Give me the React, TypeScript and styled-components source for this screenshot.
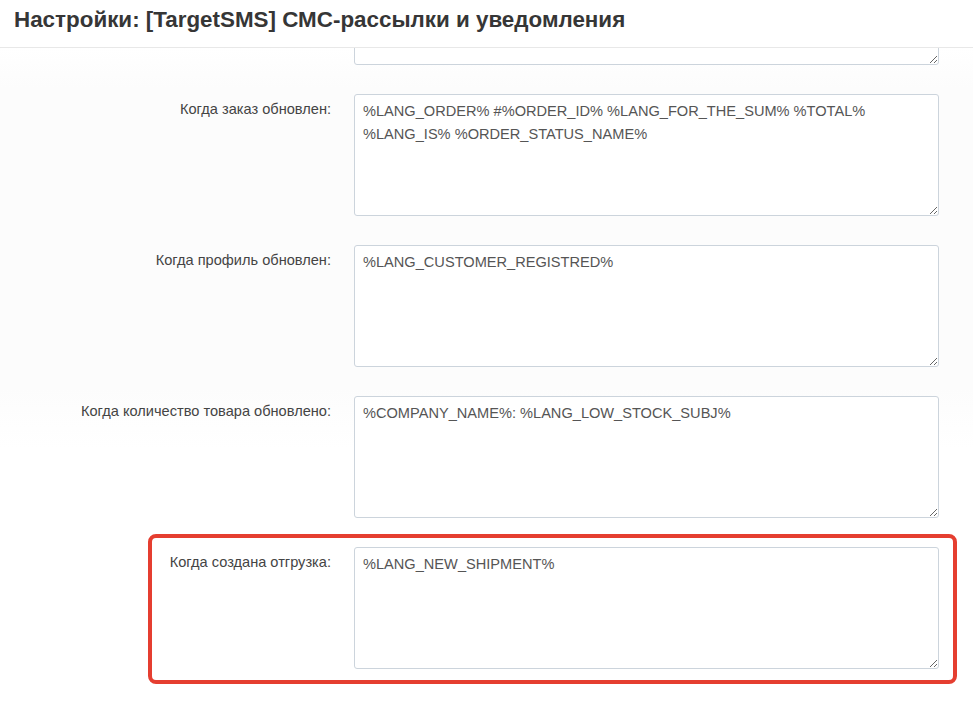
import React from 'react';
import styled, { createGlobalStyle } from 'styled-components';

// ------------------------------------------------------------------------------------------------

type FieldType = {
  label: string;
  value: string;
  highlight?: boolean;
};

const fields: Array<FieldType> = [
  {
    label: 'Когда заказ обновлен:',
    value: '%LANG_ORDER% #%ORDER_ID% %LANG_FOR_THE_SUM% %TOTAL%\n%LANG_IS% %ORDER_STATUS_NAME%',
  },
  { label: 'Когда профиль обновлен:', value: '%LANG_CUSTOMER_REGISTRED%' },
  { label: 'Когда количество товара обновлено:', value: '%COMPANY_NAME%: %LANG_LOW_STOCK_SUBJ%' },
  { label: 'Когда создана отгрузка:', value: '%LANG_NEW_SHIPMENT%', highlight: true },
];

const GlobalStyle = createGlobalStyle`
  html, body {
    margin: 0;
    padding: 0;
    background: #ffffff;
    font-family: 'Liberation Sans', Arial, sans-serif;
  }
`;

export default function App() {
  return (
    <>
      <GlobalStyle />
      <Page>
        <Header>
          <Title>Настройки: [TargetSMS] СМС-рассылки и уведомления</Title>
        </Header>
        <Body>
          {/* tail of the previous field, scrolled mostly out of view */}
          <TopStub>
            <TextArea readOnly defaultValue="" />
          </TopStub>
          {fields.map((field, index) => (
            <Row key={index} data-highlight={field.highlight ? 'true' : 'false'}>
              <Label>{field.label}</Label>
              <TextArea readOnly defaultValue={field.value} />
            </Row>
          ))}
        </Body>
      </Page>
    </>
  );
}

//------------------------------------------------------------------------------------------------

const Page = styled.div`
  width: 973px;
  height: 703px;
  overflow: hidden;
  background: #ffffff;
`;

const Header = styled.div`
  height: 48px;
  box-sizing: border-box;
  border-bottom: 1px solid #e8e8e8;
  padding: 6px 0 0 14px;
`;

const Title = styled.h1`
  margin: 0;
  font-size: 22.4px;
  line-height: 28px;
  font-weight: 700;
  color: #363636;
`;

const Body = styled.div`
  display: flex;
  flex-direction: column;
  gap: 29px;
  background: linear-gradient(#ffffff 0px, #fcfcfc 40px, #fcfcfc 340px, #ffffff 400px);
`;

const TopStub = styled.div`
  height: 17px;
  overflow: hidden;
  display: flex;
  align-items: flex-end;
  padding-left: 354px;

  textarea {
    height: 60px;
    flex: none;
  }
`;

const Row = styled.div`
  display: grid;
  grid-template-columns: 331px 585px;
  column-gap: 23px;
  align-items: start;

  &[data-highlight='true'] {
    margin: -13px 16px 0 148px;
    padding: 9px 0 11px 0;
    border: 4px solid #e53e30;
    border-radius: 8px;
    grid-template-columns: 179px 585px;
  }
`;

const Label = styled.label`
  text-align: right;
  font-size: 14.6px;
  color: #444444;
  padding-top: 7px;
  white-space: nowrap;
`;

const TextArea = styled.textarea`
  box-sizing: border-box;
  width: 585px;
  height: 122px;
  margin: 0;
  padding: 5px 8px 4px;
  border: 1px solid #ccd4dc;
  border-radius: 3px;
  background: #ffffff;
  font-family: 'Liberation Sans', Arial, sans-serif;
  font-size: 14.6px;
  line-height: 23px;
  color: #555555;
  resize: vertical;
  outline: none;
`;
